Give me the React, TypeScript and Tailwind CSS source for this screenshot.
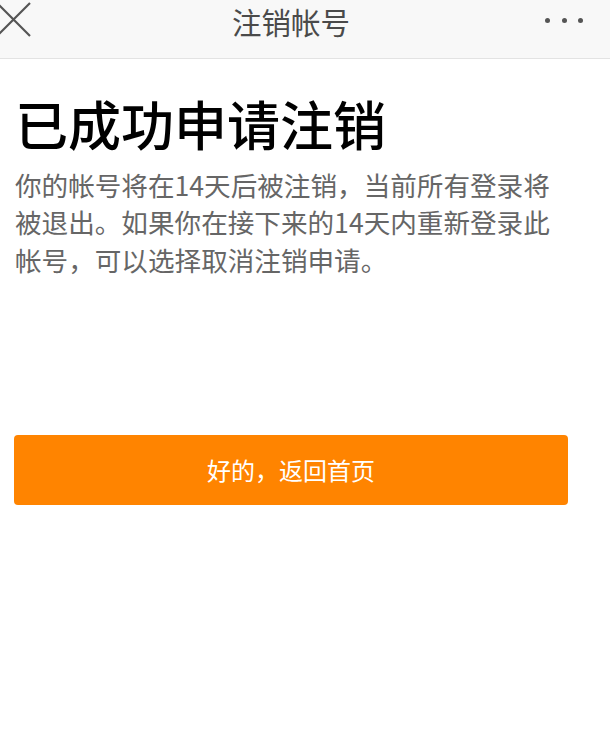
const font = { fontFamily: '"Noto Sans CJK SC", "Noto Sans", sans-serif' };

export default function App() {
  return (
    <main className="min-h-screen w-[610px] bg-white" style={font}>
      {/* top bar */}
      <header className="flex h-[59px] items-center border-b border-[#e3e3e3] bg-[#f8f8f8]">
        <div className="flex w-[40px] items-start self-stretch">
          <svg width="36" height="40" viewBox="0 0 36 40" className="-ml-[3px] mt-[2px]">
            <path d="M0 1 L33 34 M33 1 L0 34" stroke="#555" strokeWidth="2.2" fill="none" />
          </svg>
        </div>
        <h1 className="-mt-[15px] flex-1 text-center text-[29.5px] text-[#4a4a4a]">注销帐号</h1>
        <div className="-mt-[17px] flex w-[68px] items-center gap-[11.5px] pl-[3px]">
          <span className="h-[5px] w-[5px] rounded-full bg-[#555]" />
          <span className="h-[5px] w-[5px] rounded-full bg-[#555]" />
          <span className="h-[5px] w-[5px] rounded-full bg-[#555]" />
        </div>
      </header>

      <section className="px-[15px]">
        <h2 className="mt-[33px] text-[53px] leading-[1.2] font-medium text-black">已成功申请注销</h2>
        <p className="mt-[10px] text-[26.6px] leading-[37.5px] whitespace-nowrap text-[#666]">
          <span className="block">你的帐号将在14天后被注销，当前所有登录将</span>
          <span className="block">被退出。如果你在接下来的14天内重新登录此</span>
          <span className="block">帐号，可以选择取消注销申请。</span>
        </p>
      </section>

      <button className="ml-[14px] mt-[157px] flex h-[70px] w-[554px] items-center justify-center rounded-[4px] bg-[#ff8400] text-[24px] text-white">
        好的，返回首页
      </button>
    </main>
  );
}
